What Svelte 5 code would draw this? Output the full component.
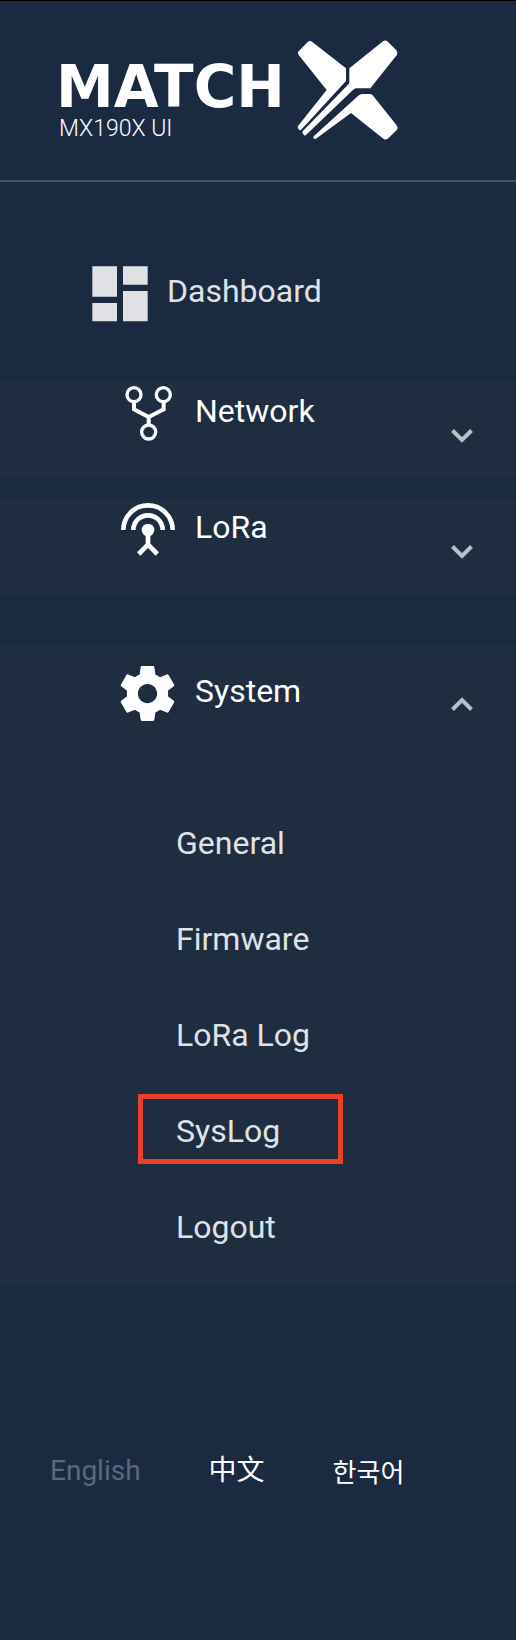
<script>
  let open = $state({ network: false, lora: false, system: true });
  let language = $state('en');

  const systemLinks = [
    { label: 'General' },
    { label: 'Firmware' },
    { label: 'LoRa Log' },
    { label: 'SysLog', marked: true },
    { label: 'Logout' }
  ];

  const languages = [
    { code: 'en', label: 'English' },
    { code: 'zh', label: '中文' },
    { code: 'ko', label: '한국어' }
  ];
</script>

{#snippet chevron(up)}
  <svg class="chevron" class:up viewBox="0 0 22 14" aria-hidden="true">
    {#if up}
      <path d="M1.5 12.5 11 3l9.500 9.500" />
    {:else}
      <path d="M1.500 1.500 11 11l9.500-9.500" />
    {/if}
  </svg>
{/snippet}

<div class="sidebar">
  <header>
    <a class="brand" href="#home">
      <span class="names">
        <span class="wordmark">MATCH</span>
        <span class="model">MX190X UI</span>
      </span>
      <svg class="mark" viewBox="892 117 306 306" aria-hidden="true">
        <path d="M895 160q-1-3 2-6l27-28q7-6 13-1l102 80v38L906 388q-3 5-7 1-7-4-4-11l86-108-84-105Z" />
        <path d="M1049 205l101-81q6-5 12-1l28 28q6 6 2 13l-80 101h-43q-6 1-10 6L919 405q-4 3-6 0l-4-5q-3-2 0-6l138-142q2-3 2-7Z" />
        <path d="M942 409l132-120q7-7 14-7h22q6 0 9 4l73 91q4 6 0 12l-26 26q-7 6-14 2l-98-78-103 76q-4 3-7 1-6-3-2-7Z" />
      </svg>
    </a>
  </header>

  <nav aria-label="Main">
    <a class="row dashboard" href="#dashboard">
      <svg class="icon" viewBox="36 48 168 168" aria-hidden="true">
        <path d="M37 49h74v91H37zM37 159h74v55H37zM129 49h74v55h-74zM129 123h74v91h-74z" />
      </svg>
      <span class="label">Dashboard</span>
    </a>

    <section>
      <button class="row" aria-expanded={open.network} onclick={() => (open.network = !open.network)}>
        <svg class="icon" viewBox="60 48 168 168" aria-hidden="true">
          <g fill="none" stroke="currentColor">
            <g stroke-width="10">
              <circle cx="102" cy="74" r="21" />
              <circle cx="190" cy="74" r="21" />
              <circle cx="146" cy="186" r="21" />
            </g>
            <path stroke-width="12" d="M102 96v22l44 23 45-23V96M146 139v24" />
          </g>
        </svg>
        <span class="label">Network</span>
        {@render chevron(open.network)}
      </button>
    </section>

    <section>
      <button class="row" aria-expanded={open.lora} onclick={() => (open.lora = !open.lora)}>
        <svg class="icon" viewBox="60 396 168 168" aria-hidden="true">
          <circle cx="144" cy="480" r="19" />
          <g fill="none" stroke="currentColor" stroke-width="14">
            <path d="M70 480a74 74 0 0 1 148 0M100 480a44 44 0 0 1 88 0" />
            <path d="M144 485v38M116 552l28-28 28 28" />
          </g>
        </svg>
        <span class="label">LoRa</span>
        {@render chevron(open.lora)}
      </button>
    </section>

    <section class="system">
      <button class="row" aria-expanded={open.system} onclick={() => (open.system = !open.system)}>
        <svg class="icon" viewBox="2 2 20.36 20.36" aria-hidden="true">
          <path d="M19.43 12.98c.04-.32.07-.64.07-.98s-.03-.66-.07-.98l2.11-1.65c.19-.15.24-.42.12-.64l-2-3.46c-.12-.22-.39-.3-.61-.22l-2.49 1c-.52-.4-1.08-.73-1.69-.98l-.38-2.65C14.460 2.180 14.250 2 14 2h-4c-.25 0-.46.18-.49.42l-.38 2.65c-.61.25-1.17.59-1.69.98l-2.49-1c-.23-.09-.49 0-.61.22l-2 3.460c-.13.22-.07.49.12.64l2.110 1.650c-.04.32-.07.65-.07.98s.03.66.07.98l-2.110 1.650c-.19.15-.24.42-.12.64l2 3.460c.12.22.39.3.61.22l2.490-1c.52.4 1.080.73 1.690.98l.38 2.650c.03.24.24.42.49.42h4c.25 0 .46-.18.49-.42l.38-2.650c.61-.25 1.170-.59 1.690-.98l2.490 1c.23.09.49 0 .61-.22l2-3.460c.12-.22.07-.49-.12-.64l-2.110-1.650zM12 15.500c-1.930 0-3.500-1.570-3.500-3.500s1.570-3.500 3.500-3.500 3.500 1.570 3.500 3.500-1.570 3.500-3.500 3.500z" />
        </svg>
        <span class="label">System</span>
        {@render chevron(open.system)}
      </button>
      {#if open.system}
        <ul>
          {#each systemLinks as link}
            <li><a class:marked={link.marked} href="#{link.label}">{link.label}</a></li>
          {/each}
        </ul>
      {/if}
    </section>
  </nav>

  <footer>
    {#each languages as item}
      <button lang={item.code} class:current={language === item.code} onclick={() => (language = item.code)}>{item.label}</button>
    {/each}
  </footer>
</div>

<style>
  :global(body) {
    background: #1a2a41;
  }

  .sidebar {
    box-sizing: border-box;
    min-height: 100vh;
    border-top: 1px solid #000;
    background: #1a2a41;
    color: #fff;
    font-family: Roboto, 'Noto Sans CJK SC', sans-serif;
    font-size: 32px;
  }

  a,
  button {
    color: inherit;
    font: inherit;
    text-decoration: none;
  }

  button {
    margin: 0;
    padding: 0;
    border: 0;
    background: none;
    text-align: left;
    cursor: pointer;
  }

  header {
    padding: 38px 56px 37px;
    border-bottom: 2px solid #465468;
  }

  .brand {
    display: flex;
    align-items: flex-start;
  }

  .names {
    display: flex;
    flex-direction: column;
    width: 241px;
    padding-top: 20px;
  }

  .wordmark {
    font-family: 'DejaVu Sans', sans-serif;
    font-size: 58px;
    font-weight: 700;
    line-height: 56px;
  }

  .model {
    padding-left: 3px;
    font-size: 23px;
    font-weight: 300;
    line-height: 28px;
  }

  .mark {
    width: 102px;
    height: 102px;
    fill: currentColor;
  }

  .row {
    display: flex;
    align-items: flex-start;
    gap: 19px;
    box-sizing: border-box;
    width: 100%;
    padding: 4px 43px 35px 120px;
  }

  .dashboard {
    padding: 84px 43px 60px 92px;
    color: #e0e1e5;
  }

  .icon {
    flex: none;
    width: 56px;
    height: 56px;
    fill: currentColor;
  }

  .label {
    line-height: 50px;
  }

  .chevron {
    width: 22px;
    height: 14px;
    margin: 43px 0 0 auto;
    fill: none;
    stroke: #bbc0c5;
    stroke-width: 4px;
  }

  .chevron.up {
    margin-top: 31px;
  }

  section {
    min-height: 96px;
    margin-bottom: 20px;
    background: #1e2d3f;
  }

  .system {
    margin: 52px 0 0;
    padding-bottom: 13px;
  }

  .system .row {
    padding-top: 20px;
    padding-bottom: 71px;
  }

  ul {
    margin: 0;
    padding: 0 0 0 138px;
    list-style: none;
  }

  li {
    display: flex;
    align-items: center;
    height: 96px;
  }

  li a {
    box-sizing: border-box;
    width: 205px;
    padding: 4px 0 0 33px;
    border: 5px solid transparent;
    color: #e0e2e5;
    line-height: 56px;
  }

  li .marked {
    border-color: #ea4025;
  }

  footer {
    display: flex;
    gap: 68px;
    padding: 161px 50px 80px;
    font-size: 28px;
    line-height: 48px;
  }

  footer .current {
    color: #5d687a;
  }

  footer [lang='ko'] {
    font-family: 'Noto Sans CJK KR', sans-serif;
    font-size: 26px;
  }
</style>
